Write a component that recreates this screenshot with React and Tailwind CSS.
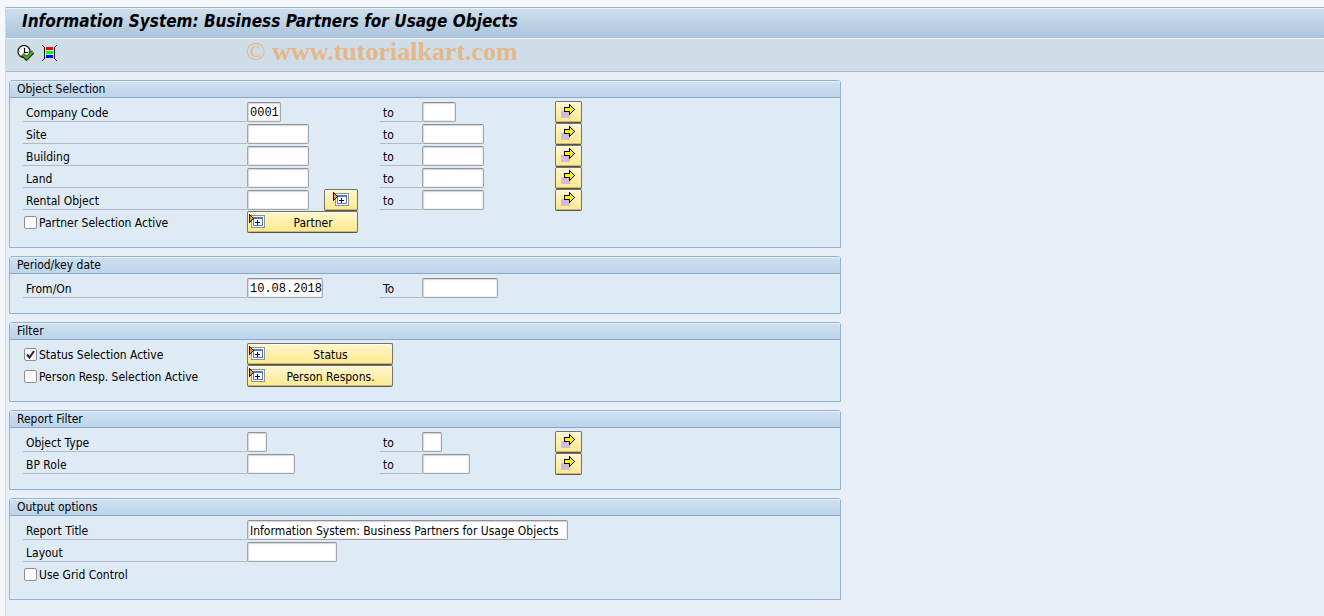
import React from "react";

function ExecuteIcon() {
  return (
    <svg width="17" height="16" viewBox="0 0 17 16" aria-hidden="true">
      <circle cx="7" cy="6.5" r="6" fill="#fff" stroke="#111" strokeWidth="1.2" />
      <path d="M7 1v1M7 11v1M1.5 6.5h1M11.5 6.5h1M3.2 2.7l.7.7M10.8 2.7l-.7.7M3.2 10.3l.7-.7" stroke="#777" />
      <path d="M7.5 3v4.5H11" fill="none" stroke="#000" strokeWidth="1.2" />
      <path d="M5.500 9.500l4 4 6.500-6.500" fill="none" stroke="#173d0c" strokeWidth="4" />
      <path d="M6 9.500l3.500 3.500L15.500 7" fill="none" stroke="#58a628" strokeWidth="2.200" />
    </svg>
  );
}

function VariantIcon() {
  return (
    <svg width="15" height="16" viewBox="0 0 15 16" shapeRendering="crispEdges" aria-hidden="true">
      <path d="M0 0h1v1h1v1h1v12H2v1H1v1H0v-1h1v-1h1V2H1V1H0zM15 0h-1v1h-1v1h-1v12h1v1h1v1h1v-1h-1v-1h-1V2h1V1h1z" fill="#111" />
      <path d="M4 2h7v3H4z" fill="#ff0000" />
      <path d="M4 6h7v3H4z" fill="#00ff00" />
      <path d="M4 10h7v3H4z" fill="#0000ff" />
    </svg>
  );
}

function ArrowIcon() {
  return (
    <svg width="14" height="15" viewBox="0 0 14 15" shapeRendering="crispEdges" aria-hidden="true">
      <path d="M0 7h9v7H0z" fill="#d0bcdc" />
      <path d="M3 3h5V0h1v1h1v1h1v1h1v1h1v1h1v1h-1v1h-1v1h-1v1h-1v1H9v1H8V8H3z" fill="#000" />
      <path d="M4 4h5V2h1v1h1v1h1v1h1v1h-1v1h-1v1h-1v1H9V7H4z" fill="#ffee00" />
    </svg>
  );
}

function ExpandIcon() {
  return (
    <svg width="16" height="15" viewBox="0 0 16 15" shapeRendering="crispEdges" aria-hidden="true">
      <path d="M2 1h14v13H2z" fill="#8d929c" />
      <path d="M3 2h12v11H3z" fill="#fff" />
      <path d="M4 3h10v9H4z" fill="#4f7fc0" />
      <path d="M5 5h8v6H5z" fill="#fff" />
      <path d="M8 6h1v2h2v1H9v2H8V9H6V8h2z" fill="#0000a0" />
      <path d="M0 0h1v1h1v1h1v1h1v1h1v1H4v1H3v1H2v1H1v1H0z" fill="#111" />
      <path d="M1 2h1v1h1v1h1v1H3v1H2v1H1z" fill="#ff9a00" />
    </svg>
  );
}

function CheckMark() {
  return (
    <svg
      viewBox="0 0 11 11"
      aria-hidden="true"
      className="pointer-events-none invisible col-start-1 row-start-1 m-px size-[11px] peer-checked:visible"
    >
      <path d="M2 5.500l2.500 3L9 2" fill="none" stroke="#222238" strokeWidth="2" />
    </svg>
  );
}

const buttonLook =
  "rounded-[2px] border border-[#77736a] border-b-[#55524c] bg-linear-to-b from-[#fdf6cf] via-[#fff0ac] to-[#fde890] shadow-[inset_0_1px_0_#fffbe6,inset_0_-1px_0_#c9ba78]";

function Group({ title, children }) {
  return (
    <section className="rounded-t-[3px] border border-[#93b1d0] bg-[#deeaf4] pb-3.5">
      <h2 className="h-[17px] rounded-t-[2px] border-b border-[#8aa7c9] bg-linear-to-b from-[#cfe0f0] to-[#bdd4ea] pl-[7px] leading-4 shadow-[inset_0_1px_0_#e9f2fa]">
        {title}
      </h2>
      <div className="pt-[3px] pl-[13px]">{children}</div>
    </section>
  );
}

function Row({ children }) {
  return <div className="grid h-[22px] grid-cols-[224px_133px_42px_133px_27px]">{children}</div>;
}

function Label({ htmlFor, children }) {
  return (
    <label htmlFor={htmlFor} className="h-[21px] border-b border-[#b3b9c0] pl-[3px] leading-6">
      {children}
    </label>
  );
}

function Field({ id, width, value = "", font = "" }) {
  return (
    <input
      id={id}
      type="text"
      defaultValue={value}
      className={`mt-px h-5 rounded-[2px] border border-[#a3a5aa] border-t-[#8f9196] bg-white pt-px pl-0.5 shadow-[inset_1px_1px_1px_#d4d4da,inset_-1px_-1px_1px_#ececf0] outline-none ${width} ${font}`}
    />
  );
}

function RangeRow({ id, label, width, value, font, to = "to", more = true, extra }) {
  return (
    <Row>
      <Label htmlFor={`${id}-from`}>{label}</Label>
      <div className="flex items-start">
        <Field id={`${id}-from`} width={width} value={value} font={font} />
        {extra}
      </div>
      <Label htmlFor={`${id}-to`}>{to}</Label>
      <Field id={`${id}-to`} width={width} />
      {more && (
        <button type="button" aria-label={`Multiple selection: ${label}`} className={`flex h-[22px] items-start pt-0.5 pl-[5px] ${buttonLook}`}>
          <ArrowIcon />
        </button>
      )}
    </Row>
  );
}

function CheckRow({ id, label, checked = false, button, buttonWidth }) {
  return (
    <Row>
      <div className="flex items-start gap-0.5 pl-px">
        <span className="grid pt-[5px]">
          <input
            id={id}
            type="checkbox"
            defaultChecked={checked}
            className="peer col-start-1 row-start-1 size-[13px] appearance-none rounded-[2px] border border-[#8e8f92] bg-white"
          />
          <CheckMark />
        </span>
        <label htmlFor={id} className="leading-6">{label}</label>
      </div>
      {button && (
        <button type="button" className={`flex h-[22px] items-start pl-px ${buttonWidth} ${buttonLook}`}>
          <span className="pt-0.5"><ExpandIcon /></span>
          <span className="flex-1 pl-1 text-center leading-[22px]">{button}</span>
        </button>
      )}
    </Row>
  );
}

export default function App() {
  const mono = "font-['Liberation_Mono',monospace]";
  return (
    <div className="min-h-screen bg-[#f4f8fc] pl-[5px] pt-[7px] font-['DejaVu_Sans_Condensed','DejaVu_Sans',sans-serif] text-[12px] text-black">
      <div className="flex min-h-[calc(100vh-7px)] flex-col border-l border-[#cfd9e6] bg-[#e8eff7]">
        <header>
          <h1 className="h-8 border-y border-t-[#9fb0c9] border-b-[#edf3f8] bg-linear-to-b from-[#cfdfed] to-[#abc4dc] pl-4 text-[17px] leading-[26px] font-bold italic shadow-[inset_0_1px_0_#eaf2f9]">
            Information System: Business Partners for Usage Objects
          </h1>
          <div className="flex h-[33px] items-start border-b border-[#a3b8cd] bg-[#cfdde8] pl-[11px]">
            <div className="flex w-[229px] gap-2 pt-1.5">
              <button type="button" aria-label="Execute"><ExecuteIcon /></button>
              <button type="button" aria-label="Get variant"><VariantIcon /></button>
            </div>
            <p className="font-['Liberation_Serif',serif] text-[26px] leading-[26px] font-bold text-[#e6b787]">
              <span className="font-normal">©</span> www.tutorialkart.com
            </p>
          </div>
        </header>
        <main className="flex w-full max-w-[835px] flex-col gap-2 pt-2 pl-[3px]">
          <Group title="Object Selection">
            <RangeRow id="company" label="Company Code" width="w-[34px]" value="0001" font={mono} />
            <RangeRow id="site" label="Site" width="w-[62px]" />
            <RangeRow id="building" label="Building" width="w-[62px]" />
            <RangeRow id="land" label="Land" width="w-[62px]" />
            <RangeRow
              id="rental"
              label="Rental Object"
              width="w-[62px]"
              extra={
                <button type="button" aria-label="Rental object details" className={`ml-[15px] flex h-[22px] w-[34px] items-start justify-center pt-0.5 ${buttonLook}`}>
                  <ExpandIcon />
                </button>
              }
            />
            <CheckRow id="partner" label="Partner Selection Active" button="Partner" buttonWidth="w-[111px]" />
          </Group>
          <Group title="Period/key date">
            <RangeRow id="period" label="From/On" to="To" width="w-[76px]" value="10.08.2018" font={mono} more={false} />
          </Group>
          <Group title="Filter">
            <CheckRow id="status" label="Status Selection Active" checked button="Status" buttonWidth="w-[146px]" />
            <CheckRow id="person" label="Person Resp. Selection Active" button="Person Respons." buttonWidth="w-[146px]" />
          </Group>
          <Group title="Report Filter">
            <RangeRow id="type" label="Object Type" width="w-5" />
            <RangeRow id="role" label="BP Role" width="w-12" />
          </Group>
          <Group title="Output options">
            <Row>
              <Label htmlFor="title">Report Title</Label>
              <Field id="title" width="w-[321px]" value="Information System: Business Partners for Usage Objects" />
            </Row>
            <Row>
              <Label htmlFor="layout">Layout</Label>
              <Field id="layout" width="w-[90px]" />
            </Row>
            <CheckRow id="grid" label="Use Grid Control" />
          </Group>
        </main>
      </div>
    </div>
  );
}
